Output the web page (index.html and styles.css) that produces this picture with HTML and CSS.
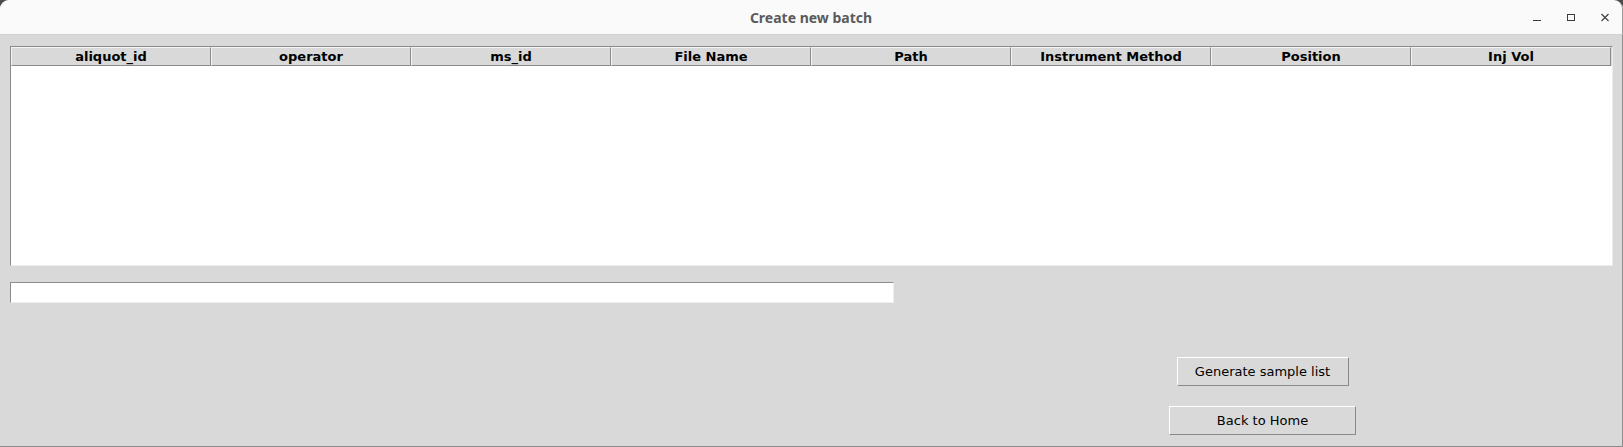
FILE: index.html
```html
<!DOCTYPE html>
<html>
<head>
<meta charset="utf-8">
<title>Create new batch</title>
<link rel="stylesheet" href="styles.css">
</head>
<body>
<div class="window">
  <div class="titlebar">
    <div class="tb-side"></div>
    <div class="tb-title">Create new batch</div>
    <div class="tb-side tb-controls">
      <span class="ctl"><svg width="16" height="16" viewBox="0 0 16 16"><line x1="4" y1="11.5" x2="12" y2="11.5" stroke="#3c3c3c" stroke-width="1"/></svg></span>
      <span class="ctl"><svg width="16" height="16" viewBox="0 0 16 16"><rect x="4.5" y="5.5" width="7" height="6" fill="none" stroke="#3c3c3c" stroke-width="1"/></svg></span>
      <span class="ctl"><svg width="16" height="16" viewBox="0 0 16 16"><path d="M4.5 5 L11.5 12 M11.5 5 L4.5 12" stroke="#3c3c3c" stroke-width="1.1"/></svg></span>
    </div>
  </div>
  <div class="content">
    <div class="tree">
      <div class="tree-head">
        <div class="th">aliquot_id</div>
        <div class="th">operator</div>
        <div class="th">ms_id</div>
        <div class="th">File Name</div>
        <div class="th">Path</div>
        <div class="th">Instrument Method</div>
        <div class="th">Position</div>
        <div class="th">Inj Vol</div>
      </div>
      <div class="tree-body"></div>
    </div>
    <div class="lower">
      <input class="entry" type="text">
      <div class="actions">
        <button class="btn btn-gen">Generate sample list</button>
        <button class="btn btn-home">Back to Home</button>
      </div>
    </div>
  </div>
</div>
</body>
</html>
```
FILE: styles.css
```css
html, body {
  margin: 0;
  padding: 0;
  background: #4b4b4b;
}
.window {
  width: 1623px;
  height: 447px;
  display: flex;
  flex-direction: column;
  border-radius: 9px 9px 0 0;
  overflow: hidden;
  background: #d9d9d9;
  box-sizing: border-box;
}
.titlebar {
  height: 35px;
  flex: none;
  box-sizing: border-box;
  background: #fafafa;
  border-bottom: 1px solid #d2d2d2;
  display: grid;
  grid-template-columns: 1fr auto 1fr;
  align-items: center;
  border-right: 1px solid #9a9a9a;
  border-top-right-radius: 9px;
}
.tb-title {
  font-family: "Noto Sans", "DejaVu Sans", sans-serif;
  font-weight: bold;
  font-size: 14px;
  color: #5b5b5b;
  padding-top: 1px;
}
.tb-controls {
  display: flex;
  justify-content: flex-end;
  align-items: center;
}
.ctl {
  width: 34px;
  height: 34px;
  display: flex;
  align-items: center;
  justify-content: center;
}
.ctl svg { display: block; }
.content {
  flex: 1;
  box-sizing: border-box;
  border-right: 1px solid #8c8c8c;
  border-bottom: 1px solid #8c8c8c;
  padding: 11px 9px 0 10px;
  display: flex;
  flex-direction: column;
}
.tree {
  width: 1603px;
  height: 220px;
  box-sizing: border-box;
  border-top: 1px solid #8a8a8a;
  border-left: 1px solid #8a8a8a;
  border-bottom: 1px solid #ececec;
  border-right: 1px solid #ececec;
  background: #ffffff;
  display: flex;
  flex-direction: column;
}
.tree-head {
  display: flex;
  flex: none;
  background: #d9d9d9;
}
.th {
  width: 200px;
  height: 19px;
  box-sizing: border-box;
  border-top: 1px solid #f4f4f4;
  border-left: 1px solid #f4f4f4;
  border-right: 1px solid #8a8a8a;
  border-bottom: 1px solid #8a8a8a;
  font-family: "DejaVu Sans", sans-serif;
  font-weight: bold;
  font-size: 13px;
  line-height: 17px;
  color: #000;
  text-align: center;
  white-space: nowrap;
}
.tree-body {
  flex: 1;
  background: #fff;
}
.lower {
  display: flex;
  margin-top: 16px;
}
.entry {
  width: 884px;
  height: 21px;
  box-sizing: border-box;
  margin: 0;
  padding: 0 3px;
  border-top: 1px solid #8c8c8c;
  border-left: 1px solid #8c8c8c;
  border-bottom: 1px solid #eeeeee;
  border-right: 1px solid #eeeeee;
  background: #fff;
  outline: none;
  font-family: "DejaVu Sans", sans-serif;
  font-size: 13px;
}
.actions {
  width: 301px;
  margin-left: 218px;
  display: flex;
  flex-direction: column;
  align-items: center;
  padding-top: 75px;
  gap: 20px;
}
.btn {
  height: 29px;
  box-sizing: border-box;
  margin: 0;
  padding: 0;
  background: #d9d9d9;
  border-top: 1px solid #ffffff;
  border-left: 1px solid #ffffff;
  border-right: 1px solid #8a8a8a;
  border-bottom: 1px solid #8a8a8a;
  border-radius: 0;
  font-family: "DejaVu Sans", sans-serif;
  font-size: 13px;
  color: #000;
}
.btn-gen { width: 172px; }
.btn-home { width: 187px; }
```
